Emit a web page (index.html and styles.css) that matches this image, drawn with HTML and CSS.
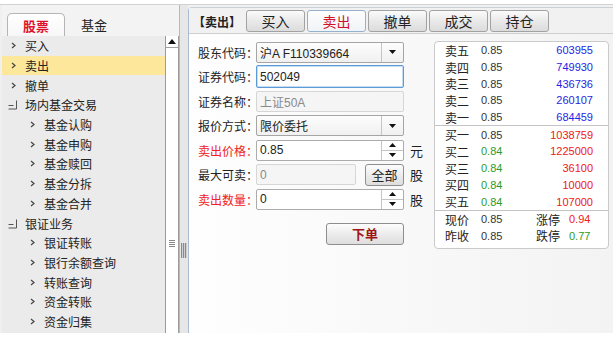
FILE: index.html
```html
<!DOCTYPE html>
<html lang="zh-CN">
<head>
  <meta charset="UTF-8" />
  <title>股票交易 - 卖出</title>
  <link rel="stylesheet" href="styles.css">
</head>
<body>
  <div class="window">
    <div class="left">
      <div class="left-tabs">
        <div class="ltab active">股票</div>
        <div class="ltab">基金</div>
      </div>
      <div class="left-body">
        <ul class="tree">
          <li><svg class="arrow" width="5" height="7"><polyline points="1,1 4,3.5 1,6" fill="none" stroke="#444" stroke-width="1.2"/></svg>买入</li>
          <li class="selected"><svg class="arrow" width="5" height="7"><polyline points="1,1 4,3.5 1,6" fill="none" stroke="#444" stroke-width="1.2"/></svg>卖出</li>
          <li><svg class="arrow" width="5" height="7"><polyline points="1,1 4,3.5 1,6" fill="none" stroke="#444" stroke-width="1.2"/></svg>撤单</li>
          <li class="group"><svg class="minus" width="11" height="11"><path d="M1.5 6.5h5M9.5 1.5v8.5M1.5 10h8" fill="none" stroke="#555" stroke-width="1"/></svg>场内基金交易</li>
          <li class="sub"><svg class="arrow" width="5" height="7"><polyline points="1,1 4,3.5 1,6" fill="none" stroke="#444" stroke-width="1.2"/></svg>基金认购</li>
          <li class="sub"><svg class="arrow" width="5" height="7"><polyline points="1,1 4,3.5 1,6" fill="none" stroke="#444" stroke-width="1.2"/></svg>基金申购</li>
          <li class="sub"><svg class="arrow" width="5" height="7"><polyline points="1,1 4,3.5 1,6" fill="none" stroke="#444" stroke-width="1.2"/></svg>基金赎回</li>
          <li class="sub"><svg class="arrow" width="5" height="7"><polyline points="1,1 4,3.5 1,6" fill="none" stroke="#444" stroke-width="1.2"/></svg>基金分拆</li>
          <li class="sub"><svg class="arrow" width="5" height="7"><polyline points="1,1 4,3.5 1,6" fill="none" stroke="#444" stroke-width="1.2"/></svg>基金合并</li>
          <li class="group"><svg class="minus" width="11" height="11"><path d="M1.5 6.5h5M9.5 1.5v8.5M1.5 10h8" fill="none" stroke="#555" stroke-width="1"/></svg>银证业务</li>
          <li class="sub"><svg class="arrow" width="5" height="7"><polyline points="1,1 4,3.5 1,6" fill="none" stroke="#444" stroke-width="1.2"/></svg>银证转账</li>
          <li class="sub"><svg class="arrow" width="5" height="7"><polyline points="1,1 4,3.5 1,6" fill="none" stroke="#444" stroke-width="1.2"/></svg>银行余额查询</li>
          <li class="sub"><svg class="arrow" width="5" height="7"><polyline points="1,1 4,3.5 1,6" fill="none" stroke="#444" stroke-width="1.2"/></svg>转账查询</li>
          <li class="sub"><svg class="arrow" width="5" height="7"><polyline points="1,1 4,3.5 1,6" fill="none" stroke="#444" stroke-width="1.2"/></svg>资金转账</li>
          <li class="sub"><svg class="arrow" width="5" height="7"><polyline points="1,1 4,3.5 1,6" fill="none" stroke="#444" stroke-width="1.2"/></svg>资金归集</li>
        </ul>
        <div class="vscroll">
          <div class="scroll-up"><svg width="8" height="5"><polygon points="0,5 4,0 8,5" fill="#111"/></svg></div>
          <div class="scroll-grip"></div>
        </div>
      </div>
    </div>

    <div class="splitter"><div class="splitter-grip"></div></div>

    <div class="right">
      <div class="right-head">
        <span class="title">【卖出】</span>
        <div class="rtab">买入</div>
        <div class="rtab active">卖出</div>
        <div class="rtab">撤单</div>
        <div class="rtab">成交</div>
        <div class="rtab">持仓</div>
      </div>
      <div class="right-body">
        <div class="order">
          <div class="row">
            <span class="label">股东代码：</span>
            <div class="field select">
              <span class="value">沪A F110339664</span>
              <span class="drop"><svg width="7" height="4"><polygon points="0,0 7,0 3.5,4" fill="#111"/></svg></span>
            </div>
          </div>
          <div class="row">
            <span class="label">证券代码：</span>
            <div class="field focus"><span class="value">502049</span></div>
          </div>
          <div class="row">
            <span class="label">证券名称：</span>
            <div class="field disabled"><span class="value">上证50A</span></div>
          </div>
          <div class="row">
            <span class="label">报价方式：</span>
            <div class="field select">
              <span class="value">限价委托</span>
              <span class="drop"><svg width="7" height="4"><polygon points="0,0 7,0 3.5,4" fill="#111"/></svg></span>
            </div>
          </div>
          <div class="row">
            <span class="label red">卖出价格：</span>
            <div class="field">
              <span class="value">0.85</span>
              <span class="spin">
                <span><svg width="7" height="4"><polygon points="0,4 3.5,0 7,4" fill="#111"/></svg></span>
                <span><svg width="7" height="4"><polygon points="0,0 7,0 3.5,4" fill="#111"/></svg></span>
              </span>
            </div>
            <span class="unit">元</span>
          </div>
          <div class="row">
            <span class="label">最大可卖：</span>
            <div class="field disabled short"><span class="value">0</span></div>
            <button class="btn all">全部</button>
            <span class="unit">股</span>
          </div>
          <div class="row">
            <span class="label red">卖出数量：</span>
            <div class="field">
              <span class="value">0</span>
              <span class="spin">
                <span><svg width="7" height="4"><polygon points="0,4 3.5,0 7,4" fill="#111"/></svg></span>
                <span><svg width="7" height="4"><polygon points="0,0 7,0 3.5,4" fill="#111"/></svg></span>
              </span>
            </div>
            <span class="unit">股</span>
          </div>
          <button class="btn submit">下单</button>
        </div>

        <div class="quote">
          <div class="qgroup">
            <div class="qrow"><span class="qlabel">卖五</span><span class="qprice">0.85</span><span class="qvol blue">603955</span></div>
            <div class="qrow"><span class="qlabel">卖四</span><span class="qprice">0.85</span><span class="qvol blue">749930</span></div>
            <div class="qrow"><span class="qlabel">卖三</span><span class="qprice">0.85</span><span class="qvol blue">436736</span></div>
            <div class="qrow"><span class="qlabel">卖二</span><span class="qprice">0.85</span><span class="qvol blue">260107</span></div>
            <div class="qrow"><span class="qlabel">卖一</span><span class="qprice">0.85</span><span class="qvol blue">684459</span></div>
          </div>
          <div class="qgroup">
            <div class="qrow"><span class="qlabel">买一</span><span class="qprice">0.85</span><span class="qvol red">1038759</span></div>
            <div class="qrow"><span class="qlabel">买二</span><span class="qprice green">0.84</span><span class="qvol red">1225000</span></div>
            <div class="qrow"><span class="qlabel">买三</span><span class="qprice green">0.84</span><span class="qvol red">36100</span></div>
            <div class="qrow"><span class="qlabel">买四</span><span class="qprice green">0.84</span><span class="qvol red">10000</span></div>
            <div class="qrow"><span class="qlabel">买五</span><span class="qprice green">0.84</span><span class="qvol red">107000</span></div>
          </div>
          <div class="qgroup">
            <div class="qrow"><span class="qlabel">现价</span><span class="qprice wide">0.85</span><span class="qlabel2">涨停</span><span class="qprice red">0.94</span></div>
            <div class="qrow"><span class="qlabel">昨收</span><span class="qprice wide">0.85</span><span class="qlabel2">跌停</span><span class="qprice green">0.77</span></div>
          </div>
        </div>
      </div>
    </div>
  </div>
</body>
</html>
```

FILE: styles.css
```css
body {
  margin: 0;
  background: #fff;
  font-family: "Liberation Sans", "Noto Sans CJK SC", sans-serif;
  font-size: 12px;
  color: #222;
}
.window {
  display: flex;
  margin-top: 4px;
  height: 329px;
  box-sizing: border-box;
  border-top: 1px solid #d2d2d2;
  padding-left: 2px;
  background: #f0f0f0;
}

/* left navigation */
.left {
  width: 177px;
  display: flex;
  flex-direction: column;
}
.left-tabs {
  height: 31px;
  display: flex;
  align-items: flex-end;
  padding-left: 5px;
  background: #f3f3f3;
}
.ltab {
  width: 58px;
  height: 23px;
  box-sizing: border-box;
  display: flex;
  align-items: center;
  justify-content: center;
  font-size: 13px;
}
.ltab.active {
  color: #e0102c;
  font-weight: bold;
  border: 1px solid #b5b5b5;
  border-bottom: none;
  border-radius: 5px 5px 0 0;
  background: linear-gradient(#fff, #f7f7f7);
}
.left-body {
  flex: 1;
  display: flex;
  min-height: 0;
}
.tree {
  flex: 1;
  margin: 0;
  padding: 0;
  list-style: none;
  background: #ebebeb;
  overflow: hidden;
}
.tree li {
  height: 19.7px;
  display: flex;
  align-items: center;
  padding-left: 9px;
  white-space: nowrap;
}
.tree li .arrow {
  margin-right: 9px;
}
.tree li.sub {
  padding-left: 28px;
}
.tree li.group {
  padding-left: 5px;
}
.tree li .minus {
  margin-right: 7px;
}
.tree li.selected {
  background: #fde79b;
}
.vscroll {
  width: 14px;
  box-sizing: border-box;
  background: #fff;
  border-left: 1px solid #9c9c9c;
  border-right: 1px solid #9c9c9c;
  display: flex;
  flex-direction: column;
}
.scroll-up {
  height: 11px;
  border-bottom: 1px solid #a0a0a0;
  display: flex;
  align-items: center;
  justify-content: center;
}
.scroll-grip {
  margin: 192px auto 0;
  width: 6px;
  height: 8px;
  background: repeating-linear-gradient(#888 0 1px, transparent 1px 2px);
}

/* splitter */
.splitter {
  width: 9px;
  box-sizing: border-box;
  border-left: 1px solid #b8b8b8;
  background: #e7e7e7;
  display: flex;
  flex-direction: column;
  align-items: center;
}
.splitter-grip {
  margin-top: 238px;
  width: 6px;
  height: 15px;
  background: repeating-linear-gradient(to right, #8a8a8a 0 1px, #d0d0d0 1px 2px);
}

/* right panel */
.right {
  flex: 1;
  display: flex;
  flex-direction: column;
  margin-top: 2px;
  border-left: 1px solid #a8bdd4;
  border-top: 1px solid #c8d0d8;
  border-radius: 4px 0 0 0;
}
.right-head {
  height: 26px;
  box-sizing: border-box;
  display: flex;
  align-items: flex-end;
  padding-left: 4px;
  background: #f1f1f1;
  border-bottom: 1px solid #cfcfcf;
}
.title {
  align-self: center;
  width: 53px;
  font-weight: bold;
  margin-top: 2px;
}
.rtab {
  width: 59px;
  height: 22px;
  box-sizing: border-box;
  margin-right: 2px;
  margin-bottom: 1px;
  border: 1px solid #a2a2a2;
  border-radius: 3px;
  background: linear-gradient(#fbfbfb, #e9e9e9 50%, #dcdcdc);
  display: flex;
  align-items: center;
  justify-content: center;
  font-size: 14px;
  color: #222;
}
.rtab.active {
  color: #d40f2a;
  border-color: #93b1cf;
  background: linear-gradient(#fdfdfd, #f1f4f7);
}
.right-body {
  flex: 1;
  display: flex;
  align-items: flex-start;
  padding: 7px 0 0 9px;
  background: linear-gradient(to right, #fefefe, #f3f3f3);
}

/* order form */
.order {
  width: 226px;
  display: flex;
  flex-direction: column;
  gap: 2.5px;
}
.row {
  height: 22px;
  display: flex;
  align-items: center;
}
.label {
  width: 58px;
  white-space: nowrap;
}
.label.red {
  color: #f02222;
}
.field {
  width: 148px;
  height: 21px;
  box-sizing: border-box;
  border: 1px solid #acacac;
  border-radius: 2px;
  background: #fff;
  display: flex;
  align-items: stretch;
}
.field .value {
  flex: 1;
  display: flex;
  align-items: center;
  padding-left: 3px;
  white-space: nowrap;
}
.field.focus {
  height: 23px;
  border: 1px solid #5c9ad8;
  box-shadow: inset 0 0 0 1px #c5dcf2;
}
.field.disabled {
  border-color: #d6d6d6;
  background: #f5f5f5;
  color: #8a8a8a;
}
.field.short {
  width: 100px;
}
.field.select {
  background: linear-gradient(#fdfdfd, #f0f0f0);
  border-color: #a5a5a5;
}
.drop {
  width: 21px;
  border-left: 1px solid #c4c4c4;
  display: flex;
  align-items: center;
  justify-content: center;
}
.spin {
  width: 21px;
  border-left: 1px solid #c4c4c4;
  display: flex;
  flex-direction: column;
}
.spin span {
  flex: 1;
  display: flex;
  align-items: center;
  justify-content: center;
}
.spin span + span {
  border-top: 1px solid #c4c4c4;
}
.unit {
  margin-left: 6px;
  font-size: 13px;
}
.btn {
  font-family: inherit;
  border: 1px solid #8e8e8e;
  border-radius: 3px;
  background: linear-gradient(#fdfdfd, #ececec 50%, #dedede);
  color: #222;
  padding: 0;
  cursor: pointer;
}
.btn.all {
  width: 39px;
  height: 22px;
  margin-left: 9px;
  font-size: 13px;
}
.btn.submit {
  width: 78px;
  height: 22px;
  margin: 10px 0 0 128px;
  font-size: 13px;
  font-weight: bold;
  color: #a01414;
}

/* quote box */
.quote {
  margin-left: 10px;
  width: 175px;
  box-sizing: border-box;
  border: 1px solid #cacaca;
  border-radius: 4px;
  background: #fff;
  padding-bottom: 4px;
}
.qgroup + .qgroup {
  border-top: 1px solid #c4c4c4;
}
.qrow {
  height: 16.7px;
  display: flex;
  align-items: center;
  padding: 0 15px 0 10px;
}
.qlabel, .qlabel2 {
  width: 36px;
  font-size: 12px;
  color: #222;
}
.qlabel2 {
  width: 33px;
}
.qprice {
  font-size: 11px;
  color: #333;
}
.qprice.wide {
  width: 55px;
}
.qvol {
  margin-left: auto;
  font-size: 11px;
}
.blue {
  color: #2626e6;
}
.red {
  color: #f01818;
}
.green {
  color: #2b9a2b;
}
```
